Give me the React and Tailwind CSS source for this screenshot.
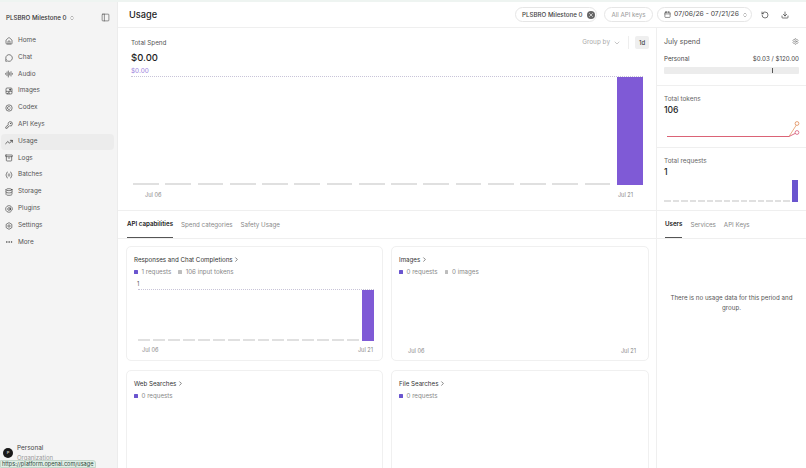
import React from 'react';
import {
  House, MessageCircle, AudioLines, KeyRound, TrendingUp, Archive,
  Database, AtSign, Settings, Ellipsis, ChevronsUpDown, PanelLeft, X, Calendar, RotateCcw,
  Download, ChevronDown, ChevronRight,
} from 'lucide-react';

const ImagesIcon = (props) => (
  <svg viewBox="0 0 24 24" fill="none" stroke="currentColor" strokeWidth="2" {...props}>
    <rect x="3" y="3" width="18" height="18" rx="3" />
    <path d="M3 13h18M12 13v8" />
    <circle cx="15.5" cy="8" r="2" fill="currentColor" />
    <path d="M6 21l4-4 2 2" />
  </svg>
);

const CodexIcon = (props) => (
  <svg viewBox="0 0 24 24" fill="none" stroke="currentColor" strokeWidth="2" {...props}>
    <circle cx="12" cy="12" r="9.5" />
    <path d="M15.5 9.5a4.5 4.5 0 1 0 0 5" strokeLinecap="round" />
  </svg>
);

const BatchesIcon = (props) => (
  <svg viewBox="0 0 24 24" fill="none" stroke="currentColor" strokeWidth="2" strokeLinecap="round" {...props}>
    <path d="M7 3C4 3 5 9 4 10.5 3.5 11.500 2.500 12 2.500 12s1 .5 1.500 1.500C5 15 4 21 7 21" />
    <path d="M17 3c3 0 2 6 3 7.500.5 1 1.500 1.500 1.500 1.500s-1 .5-1.500 1.500C19 15 20 21 17 21" />
    <path d="M9.500 9.500h5M9.500 14.500h5" />
  </svg>
);

const HexGearIcon = (props) => (
  <svg viewBox="0 0 24 24" fill="none" stroke="currentColor" strokeWidth="2" strokeLinejoin="round" {...props}>
    <path d="M12 2l8.500 5v10L12 22l-8.500-5V7z" />
    <circle cx="12" cy="12" r="3.500" />
  </svg>
);

const navItems = [
  ['Home', House], ['Chat', MessageCircle], ['Audio', AudioLines], ['Images', ImagesIcon],
  ['Codex', CodexIcon], ['API Keys', KeyRound], ['Usage', TrendingUp], ['Logs', Archive],
  ['Batches', BatchesIcon], ['Storage', Database], ['Plugins', AtSign], ['Settings', HexGearIcon],
  ['More', Ellipsis],
];

const Sidebar = () => (
  <aside className="w-[118px] shrink-0 h-full bg-[#f4f4f4] flex flex-col relative border-r border-[#ececec]">
    <div className="h-[31px] flex items-center pl-[6px] pr-[7px] shrink-0">
      <span className="text-[6.2px] font-medium text-[#333]">PLSBRO Milestone 0</span>
      <ChevronsUpDown className="w-[6px] h-[6px] ml-[3px] text-[#777]" />
      <PanelLeft className="w-[9px] h-[9px] ml-auto text-[#444]" strokeWidth={1.5} />
    </div>
    <nav className="flex flex-col gap-[1px] pl-[1px] pr-[3px]">
      {navItems.map(([label, Icon]) => (
        <div
          key={label}
          className={`h-[15.8px] flex items-center gap-[5px] pl-[4px] rounded-[4px] text-[6.4px] text-[#555] ${label === 'Usage' ? 'bg-[#ececec]' : ''}`}
        >
          <Icon className="w-[8px] h-[8px] text-[#333]" strokeWidth={label === 'Usage' ? 2.2 : 1.8} />
          {label}
        </div>
      ))}
    </nav>
    <div className="mt-auto flex items-center gap-[4px] pl-[3px] pb-[5px] shrink-0">
      <div className="w-[10px] h-[10px] rounded-full bg-[#1a1a1a] text-white text-[4px] flex items-center justify-center">P</div>
      <div className="leading-[10px]">
        <div className="text-[6.4px] text-[#444]">Personal</div>
        <div className="text-[6px] text-[#999]">Organization</div>
      </div>
    </div>
    {/* browser link status bubble */}
    <div className="absolute left-0 bottom-0 h-[8px] pl-[1px] pr-[2px] flex items-center bg-[#dfeee6] border border-[#c4d8cc] rounded-tr-[3px] text-[5.6px] text-[#2f4a3c]">
      https://platform.openai.com/usage
    </div>
  </aside>
);

const Header = () => (
  <header className="h-[26px] shrink-0 flex items-center pl-[11px] pr-[17px] border-b border-[#efefef]">
    <h1 className="text-[9.2px] font-medium text-[#222]">Usage</h1>
    <div className="ml-auto flex items-center">
      <div className="h-[15px] w-[82px] rounded-full border border-[#e6e6e6] flex items-center pl-[6px] pr-[1px] text-[6.2px] font-medium text-[#444]">
        PLSBRO Milestone 0
        <span className="ml-auto w-[8px] h-[8px] rounded-full bg-[#666] flex items-center justify-center">
          <X className="w-[6px] h-[6px] text-white" strokeWidth={2.5} />
        </span>
      </div>
      <div className="ml-[7px] h-[15px] w-[49px] rounded-full border border-[#e6e6e6] flex items-center justify-center text-[6.2px] text-[#999]">
        All API keys
      </div>
      <div className="ml-[4px] h-[15px] w-[95px] rounded-full border border-[#e6e6e6] flex items-center pl-[6px] gap-[3px] text-[6.8px] text-[#444]">
        <Calendar className="w-[7px] h-[7px]" />
        07/06/26 - 07/21/26
        <ChevronsUpDown className="w-[6px] h-[6px] text-[#777]" />
      </div>
      <RotateCcw className="ml-[9px] w-[8px] h-[8px] text-[#333]" strokeWidth={2} />
      <Download className="ml-[12px] w-[8px] h-[8px] text-[#333]" strokeWidth={2} />
    </div>
  </header>
);

// row of gray dashes with one purple bar on the right
const Bars = ({ count, barWidth, gap = 'gap-[5px]', className = '', color = 'bg-[#7f5ad6]' }) => (
  <div className={`flex items-end ${gap} ${className}`}>
    {Array.from({ length: count }).map((_, i) => (
      <div key={i} className="flex-1 h-[2px] bg-[#e0e0e0]" />
    ))}
    <div className={`${barWidth} h-full shrink-0 ${color}`} />
  </div>
);

const SpendChart = () => (
  <section className="h-[183px] shrink-0 border-b border-[#efefef] pl-[13px] pr-[13px] pt-[11px] flex flex-col">
    <div className="flex items-start">
      <div>
        <div className="text-[6.3px] text-[#555] leading-[8px]">Total Spend</div>
        <div className="text-[9.5px] font-medium text-[#222] mt-[5px] leading-[12px]">$0.00</div>
      </div>
      <div className="ml-auto flex items-center -mr-[6px] -mt-[3px]">
        <span className="text-[6.4px] text-[#aaa]">Group by</span>
        <ChevronDown className="w-[8px] h-[8px] ml-[3px] text-[#aaa]" />
        <div className="w-[1px] h-[13px] bg-[#eee] ml-[7px] mr-[6px]" />
        <div className="w-[14px] h-[13px] bg-[#efefef] rounded-[2px] text-[6px] font-medium text-[#444] flex items-center justify-center">1d</div>
      </div>
    </div>
    <div className="text-[6.4px] text-[#9a80dc] leading-[8px] mt-[3px]">$0.00</div>
    <div className="mt-[1px] h-[109px] border-t border-dotted border-[#c8c4d8]">
      <Bars count={15} barWidth="w-[26px]" gap="gap-[6.5px]" className="h-full pl-[2px]" />
    </div>
    <div className="flex justify-between text-[5.6px] text-[#888] mt-[6px] pl-[14px] pr-[10px]">
      <span>Jul 06</span>
      <span>Jul 21</span>
    </div>
  </section>
);

const Tabs = ({ items, className = '' }) => (
  <div className={`h-[28px] shrink-0 flex items-stretch gap-[8px] border-b border-[#efefef] ${className}`}>
    {items.map((t, i) => (
      <div
        key={t}
        className={`flex items-center text-[6.2px] ${i === 0 ? 'font-semibold text-[#222] border-b border-[#555]' : 'text-[#888]'}`}
      >
        {t}
      </div>
    ))}
  </div>
);

const Legend = ({ items }) => (
  <div className="flex items-center gap-[7px] mt-[4px] text-[6.2px] text-[#888] leading-[8px]">
    {items.map(([color, text]) => (
      <span key={text} className="flex items-center gap-[4px]">
        <span className={`w-[3.5px] h-[3.5px] rounded-[0.5px] ${color}`} />
        {text}
      </span>
    ))}
  </div>
);

const Card = ({ title, legend, height, children }) => (
  <div className={`${height} rounded-[5px] border border-[#f0f0f0] pt-[8px] px-[7px]`}>
    <div className="flex items-center text-[6.2px] text-[#333] leading-[9px]">
      {title}
      <ChevronRight className="w-[7px] h-[7px] ml-[0.5px]" />
    </div>
    <Legend items={legend} />
    {children}
  </div>
);

const CardGrid = () => (
  <div className="grid grid-cols-[257px_258px] gap-x-[8px] gap-y-[9px] pl-[8px] pt-[7px]">
    <Card
      title="Responses and Chat Completions"
      height="h-[115px]"
      legend={[['bg-[#6a55cf]', '1 requests'], ['bg-[#bdbdbd]', '106 input tokens']]}
    >
      <div className="text-[5.6px] text-[#555] leading-[6px] mt-[5px] pl-[3px]">1</div>
      <div className="h-[52px] border-t border-dotted border-[#c8c4d8] ml-[4px] mr-[1px] mt-[2px]">
        <Bars count={15} barWidth="w-[12px]" gap="gap-[3px]" className="h-full" />
      </div>
      <div className="flex justify-between text-[5.6px] text-[#888] mt-[5px] pl-[8px] pr-[2px]">
        <span>Jul 06</span>
        <span>Jul 21</span>
      </div>
    </Card>
    <Card
      title="Images"
      height="h-[115px]"
      legend={[['bg-[#6a55cf]', '0 requests'], ['bg-[#bdbdbd]', '0 images']]}
    >
      <div className="h-[59px] mt-[1px]" />
      <div className="flex justify-between text-[5.6px] text-[#888] mt-[11px] pl-[9px] pr-[5px]">
        <span>Jul 06</span>
        <span>Jul 21</span>
      </div>
    </Card>
    <Card title="Web Searches" height="h-[110px]" legend={[['bg-[#6a55cf]', '0 requests']]} />
    <Card title="File Searches" height="h-[110px]" legend={[['bg-[#6a55cf]', '0 requests']]} />
  </div>
);

const RightRail = () => (
  <aside className="w-[150px] shrink-0 border-l border-[#efefef] flex flex-col">
    <section className="h-[58px] shrink-0 border-b border-[#efefef] pl-[7px] pr-[7px] pt-[9px]">
      <div className="flex items-center justify-between">
        <span className="text-[7px] text-[#555] leading-[9px]">July spend</span>
        <Settings className="w-[7px] h-[7px] text-[#777]" />
      </div>
      <div className="flex items-center justify-between mt-[9px] text-[6.2px] text-[#444] leading-[8px]">
        <span>Personal</span>
        <span>$0.03 / $120.00</span>
      </div>
      <div className="mt-[4px] h-[7px] bg-[#ececec] rounded-[1px] flex items-center">
        <div className="w-[1px] h-[5px] bg-[#555] ml-[108px]" />
      </div>
    </section>
    <section className="h-[62px] shrink-0 border-b border-[#efefef] pl-[7px] pr-[7px] pt-[9px]">
      <div className="text-[6.4px] text-[#666] leading-[8px]">Total tokens</div>
      <div className="text-[8.6px] font-medium text-[#222] leading-[11px] mt-[2px]">106</div>
      <svg className="block mt-[5px]" width="140" height="20" viewBox="0 0 140 20" fill="none">
        <path d="M3 15.500H125L133 3" stroke="#e59a6a" strokeWidth="0.8" />
        <path d="M3 15.500H125L132 12" stroke="#d95a74" strokeWidth="0.9" />
        <circle cx="133" cy="2.500" r="1.900" fill="#fff" stroke="#e08a55" strokeWidth="0.8" />
        <circle cx="133" cy="11.500" r="1.900" fill="#fff" stroke="#d65a78" strokeWidth="0.8" />
      </svg>
    </section>
    <section className="h-[63px] shrink-0 pl-[7px] pr-[8px] pt-[9px] border-b border-[#efefef]">
      <div className="text-[6.4px] text-[#666] leading-[8px]">Total requests</div>
      <div className="text-[8.6px] font-medium text-[#222] leading-[11px] mt-[2px]">1</div>
      <Bars count={15} barWidth="w-[6px]" gap="gap-[2px]" className="h-[22px] mt-[2px]" color="bg-[#6a55cf]" />
    </section>
    <Tabs items={['Users', 'Services', 'API Keys']} className="pl-[8px]" />
    <p className="text-[6.2px] leading-[10px] text-[#555] text-center px-[8px] mt-[54px]">
      There is no usage data for this period and group.
    </p>
  </aside>
);

export default function App() {
  return (
    <div className="w-[806px] h-[468px] overflow-hidden bg-white flex flex-col antialiased font-['Inter',sans-serif]">
      <div className="h-[2px] shrink-0 bg-[#eef4f1]" />
      <div className="flex-1 min-h-0 flex">
        <Sidebar />
        <main className="flex-1 min-w-0 flex flex-col">
          <Header />
          <div className="flex-1 min-h-0 flex">
            <div className="w-[538px] shrink-0 flex flex-col">
              <SpendChart />
              <Tabs items={['API capabilities', 'Spend categories', 'Safety Usage']} className="pl-[9px]" />
              <CardGrid />
            </div>
            <RightRail />
          </div>
        </main>
      </div>
    </div>
  );
}
